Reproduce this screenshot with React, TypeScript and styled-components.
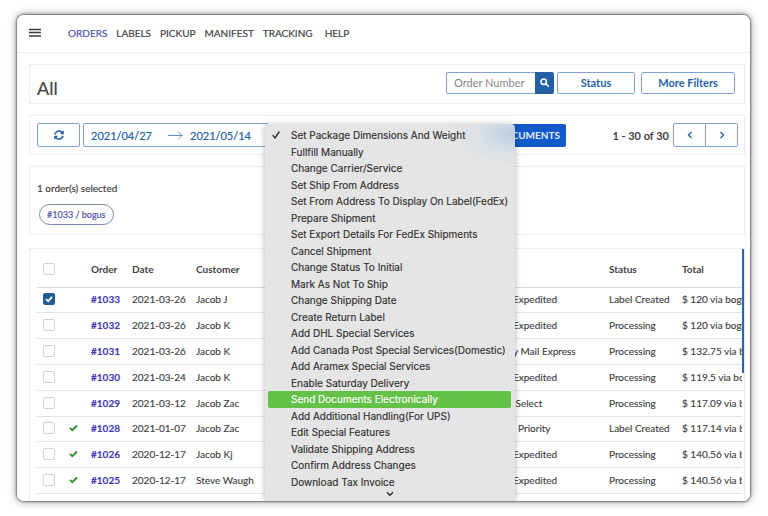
import React from 'react';
import styled, { createGlobalStyle } from 'styled-components';

const GlobalStyle = createGlobalStyle`
  * { box-sizing: border-box; }
  body { margin: 0; background: #fff; color: #424345; font-family: Lato, "Liberation Sans", sans-serif; font-size: 10px; }
  button, input { font: inherit; color: inherit; margin: 0; }
  button { padding: 0; background: none; border: 0; cursor: pointer; }
`;

const blue = '#2462a8';
const line = '#7fa3d3';

const Page = styled.div`
  height: 100vh;
  padding: 15px 18px 15px 17px;
`;

const Window = styled.div`
  position: relative;
  display: flex;
  flex-direction: column;
  height: 100%;
  overflow: hidden;
  border-radius: 7px;
  background: #fff;
`;

const WindowFrame = styled.div`
  height: 100%;
  border-radius: 7px;
  box-shadow: 0 0 2px 1px rgba(0, 0, 0, 0.45), 0 0 8px 1px rgba(0, 0, 0, 0.35);
`;

const TopBar = styled.header`
  display: flex;
  align-items: center;
  gap: 27px;
  flex: none;
  height: 38px;
  padding: 0 0 1px 12px;
  border-bottom: 1px solid #f0f0f0;
`;

const MenuToggle = styled.button`
  display: flex;
  width: 12px;
`;

const Nav = styled.nav`
  display: flex;
  gap: 9px;
`;

const NavLink = styled.a<{ $active?: boolean }>`
  font-size: 10px;
  line-height: 14px;
  text-decoration: none;
  color: ${(p) => (p.$active ? '#4a55b0' : '#424345')};
  -webkit-text-stroke: 0.2px;
  &:last-child { margin-left: 3px; }
`;

const Body = styled.main`
  display: flex;
  flex-direction: column;
  flex: 1;
  min-height: 0;
  padding: 11px 5px 0 12px;
`;

const Panel = styled.section<{ $gap?: number }>`
  display: flex;
  align-items: center;
  flex: none;
  min-height: 40px;
  margin-bottom: ${(p) => p.$gap ?? 11}px;
  padding: 0 6px 0 7px;
  border: 1px solid #eeeeef;
`;

const Title = styled.h1`
  flex: 1;
  margin: 7px 0 0;
  font-size: 18px;
  line-height: 24px;
  font-weight: 400;
  -webkit-text-stroke: 0.2px;
`;

const Filters = styled.div`
  display: flex;
  align-items: center;
  margin: 0 3px 3px 0;
  gap: 3px;
`;

const SearchBox = styled.form`
  display: flex;
  height: 22px;
`;

const SearchInput = styled.input`
  width: 89px;
  padding: 0 0 0 7px;
  border: 1px solid ${line};
  border-right: 0;
  border-radius: 2px 0 0 2px;
  font-size: 11px;
  outline: none;
  &::placeholder { color: #858585; opacity: 1; }
`;

const SearchButton = styled.button`
  display: flex;
  align-items: center;
  justify-content: center;
  width: 19px;
  border-radius: 0 2px 2px 0;
  background: #2360a5;
  color: #fff;
`;

const OutlineButton = styled.button<{ $width: number; $height?: number }>`
  display: flex;
  align-items: center;
  justify-content: center;
  flex: none;
  width: ${(p) => p.$width}px;
  height: ${(p) => p.$height ?? 22}px;
  border: 1px solid ${line};
  border-radius: 2px;
  background: #fff;
  color: ${blue};
  font-size: 11px;
  font-weight: 700;
`;

const MoreFilters = styled(OutlineButton)`
  margin-left: 3px;
`;

const DateRange = styled.div`
  display: flex;
  align-items: center;
  flex: none;
  width: 186px;
  height: 24px;
  margin-left: 3px;
  padding-left: 7px;
  gap: 11px;
  border: 1px solid ${line};
  border-radius: 2px;
  color: ${blue};
`;

const DateInput = styled.input`
  width: 66px;
  padding: 0;
  border: 0;
  outline: none;
  background: none;
  font-size: 11px;
  -webkit-text-stroke: 0.2px;
`;

const DateArrow = styled.svg`
  flex: none;
  margin-right: -4px;
`;

const DocumentsButton = styled.button`
  flex: none;
  width: 80px;
  height: 23px;
  margin-left: 217px;
  padding-right: 6px;
  border-radius: 2px;
  background: #1259c9;
  color: #e4edfb;
  font-size: 10px;
  font-weight: 700;
  text-align: right;
`;

const Pager = styled.div`
  display: flex;
  align-items: center;
  margin-left: auto;
`;

const Range = styled.span`
  margin-right: 4px;
  font-size: 11px;
  font-weight: 700;
`;

const PagerButton = styled(OutlineButton)`
  &:nth-of-type(1) { border-radius: 2px 0 0 2px; }
  &:nth-of-type(2) { margin-left: -1px; border-radius: 0 2px 2px 0; }
`;

const Selection = styled(Panel)`
  flex-direction: column;
  align-items: flex-start;
  padding: 14px 7px 9px;
`;

const SelectionText = styled.p`
  margin: 0 0 9px;
  font-size: 10px;
  line-height: 14px;
  -webkit-text-stroke: 0.2px;
`;

const Pill = styled.button`
  height: 21px;
  margin-left: 2px;
  padding: 0 7px;
  border: 1px solid #7b87b5;
  border-radius: 11px;
  color: #4f57a6;
  font-size: 9px;
  -webkit-text-stroke: 0.2px;
`;

const TablePanel = styled.section`
  display: flex;
  flex: 1;
  min-height: 0;
  border: 1px solid #eeeeef;
  border-width: 1px 0 0 1px;
`;

const TableArea = styled.div`
  flex: 1;
  min-width: 0;
  padding: 0 0 7px 7px;
`;

const Table = styled.table`
  width: 100%;
  height: 100%;
  table-layout: fixed;
  border-collapse: collapse;
`;

const HeadCell = styled.th`
  height: 38px;
  padding: 2px 0 0;
  border-bottom: 1px solid #dcdcdc;
  font-size: 10px;
  font-weight: 700;
  text-align: left;
`;

const Cell = styled.td`
  padding: 0 0 1px;
  border-bottom: 1px solid #e3e3e3;
  font-size: 10px;
  white-space: nowrap;
  overflow: hidden;
  -webkit-text-stroke: 0.15px;
`;

const OrderLink = styled.a`
  color: #3f3cb4;
  font-weight: 700;
  text-decoration: none;
`;

const Tick = styled.input`
  appearance: none;
  display: block;
  width: 12px;
  height: 12px;
  margin: 0 0 0 6px;
  border: 1px solid #d3d3d3;
  border-radius: 2px;
  background: #fff;
  &:checked {
    border-color: #215b99;
    background: #215b99 url("data:image/svg+xml,%3Csvg xmlns='http://www.w3.org/2000/svg' viewBox='0 0 10 10'%3E%3Cpath d='M2 5.2l2.2 2.1L8 2.9' fill='none' stroke='white' stroke-width='1.8'/%3E%3C/svg%3E") center / 10px no-repeat;
  }
`;

const Track = styled.div`
  flex: none;
  width: 3px;
  border-right: 1px solid #eeeeef;
`;

const Thumb = styled.div`
  width: 2px;
  height: 124px;
  background: #2b66ad;
`;

const Menu = styled.div`
  position: absolute;
  top: 109px;
  bottom: 0;
  left: 248px;
  display: flex;
  flex-direction: column;
  width: 250px;
  padding: 3px 4px 3px 3px;
  border-radius: 4px;
  background:
    radial-gradient(ellipse 65px 34px at 100% 10px, rgba(167, 197, 222, 0.7), rgba(205, 219, 230, 0.45) 55%, transparent),
    #e5e5e5;
  box-shadow: 0 1px 6px rgba(0, 0, 0, 0.3);
  color: #2e2e2e;
  font-family: Inter, "Liberation Sans", sans-serif;
`;

const MenuItem = styled.button<{ $active?: boolean }>`
  display: flex;
  align-items: center;
  flex: 1;
  border-radius: 2px;
  background: ${(p) => (p.$active ? '#62c146' : 'transparent')};
  color: ${(p) => (p.$active ? '#fff' : 'inherit')};
  font-size: 10px;
  line-height: 14px;
  white-space: nowrap;
  -webkit-text-stroke: 0.15px;
`;

const Mark = styled.span`
  display: flex;
  flex: none;
  width: 23px;
  padding-left: 4px;
`;

const MoreBelow = styled.div`
  display: flex;
  align-items: center;
  justify-content: center;
  height: 8px;
`;

const nav = ['ORDERS', 'LABELS', 'PICKUP', 'MANIFEST', 'TRACKING', 'HELP'];

const actions = [
  'Set Package Dimensions And Weight',
  'Fullfill Manually',
  'Change Carrier/Service',
  'Set Ship From Address',
  'Set From Address To Display On Label(FedEx)',
  'Prepare Shipment',
  'Set Export Details For FedEx Shipments',
  'Cancel Shipment',
  'Change Status To Initial',
  'Mark As Not To Ship',
  'Change Shipping Date',
  'Create Return Label',
  'Add DHL Special Services',
  'Add Canada Post Special Services(Domestic)',
  'Add Aramex Special Services',
  'Enable Saturday Delivery',
  'Send Documents Electronically',
  'Add Additional Handling(For UPS)',
  'Edit Special Features',
  'Validate Shipping Address',
  'Confirm Address Changes',
  'Download Tax Invoice',
];

const orders = [
  { id: '#1033', date: '2021-03-26', customer: 'Jacob J', service: 'Expedited', status: 'Label Created', total: '$ 120 via bogus', done: false },
  { id: '#1032', date: '2021-03-26', customer: 'Jacob K', service: 'Expedited', status: 'Processing', total: '$ 120 via bogus', done: false },
  { id: '#1031', date: '2021-03-26', customer: 'Jacob K', service: 'y Mail Express', status: 'Processing', total: '$ 132.75 via bogus', done: false },
  { id: '#1030', date: '2021-03-24', customer: 'Jacob K', service: 'Expedited', status: 'Processing', total: '$ 119.5 via bogus', done: false },
  { id: '#1029', date: '2021-03-12', customer: 'Jacob Zac', service: '\u00a0Select', status: 'Processing', total: '$ 117.09 via bogus', done: false },
  { id: '#1028', date: '2021-01-07', customer: 'Jacob Zac', service: '\u00a0\u00a0Priority', status: 'Label Created', total: '$ 117.14 via bogus', done: true },
  { id: '#1026', date: '2020-12-17', customer: 'Jacob Kj', service: 'Expedited', status: 'Processing', total: '$ 140.56 via bogus', done: true },
  { id: '#1025', date: '2020-12-17', customer: 'Steve Waugh', service: 'Expedited', status: 'Processing', total: '$ 140.56 via bogus', done: true },
];

const Chevron = ({ d }: { d: string }) => (
  <svg width="8" height="8" viewBox="0 0 8 8" fill="none" stroke="currentColor" strokeWidth="1.3">
    <path d={d} />
  </svg>
);

export default function App() {
  return (
    <Page>
      <GlobalStyle />
      <WindowFrame>
        <Window>
          <TopBar>
            <MenuToggle aria-label="Toggle menu">
              <svg width="12" height="10" viewBox="0 0 12 10" stroke="#3c3c3c">
                <path d="M0 1.5h12M0 4.5h12M0 8h12" strokeWidth="1.5" />
              </svg>
            </MenuToggle>
            <Nav>
              {nav.map((n, i) => (
                <NavLink key={n} href="#" $active={i === 0}>{n}</NavLink>
              ))}
            </Nav>
          </TopBar>
          <Body>
            <Panel>
              <Title>All</Title>
              <Filters>
                <SearchBox>
                  <SearchInput placeholder="Order Number" aria-label="Order Number" />
                  <SearchButton type="button" aria-label="Search">
                    <svg width="9" height="9" viewBox="0 0 9 9" fill="none" stroke="currentColor" strokeWidth="1.6">
                      <circle cx="3.7" cy="3.7" r="2.7" />
                      <path d="M5.7 5.7l2.6 2.6" strokeLinecap="round" />
                    </svg>
                  </SearchButton>
                </SearchBox>
                <OutlineButton $width={78}>Status</OutlineButton>
                <MoreFilters $width={94}>More Filters</MoreFilters>
              </Filters>
            </Panel>
            <Panel>
              <OutlineButton $width={43} $height={24} aria-label="Refresh">
                <svg width="10" height="10" viewBox="0 0 512 512" fill="currentColor">
                  <path d="M370.7 133.3C339.5 104 298.9 88 255.8 88c-77.5.1-144.3 53.2-162.8 126.9-1.3 5.4-6.1 9.1-11.7 9.1H24.1c-7.5 0-13.2-6.8-11.8-14.2C33.9 94.9 134.8 8 256 8c66.4 0 126.8 26.1 171.3 68.7L463 41c15.1-15.1 41-4.4 41 17v134c0 13.3-10.7 24-24 24H346c-21.4 0-32.1-25.9-17-41l41.7-41.7zM32 296h134c21.4 0 32.1 25.9 17 41l-41.8 41.8C172.5 408 213.1 424 256.2 424c77.5-.1 144.3-53.2 162.8-126.9 1.3-5.4 6.1-9.1 11.7-9.1h57.3c7.5 0 13.2 6.8 11.8 14.2C478.1 417.1 377.2 504 256 504c-66.4 0-126.8-26.1-171.3-68.7L49 471c-15.1 15.1-41 4.4-41-17V320c0-13.3 10.7-24 24-24z" />
                </svg>
              </OutlineButton>
              <DateRange>
                <DateInput defaultValue="2021/04/27" aria-label="From date" />
                <DateArrow width="15" height="9" viewBox="0 0 15 9" fill="none" stroke="#5d8fc9" strokeWidth="1">
                  <path d="M0 4.5h14M10 .5l4 4-4 4" />
                </DateArrow>
                <DateInput defaultValue="2021/05/14" aria-label="To date" />
              </DateRange>
              <DocumentsButton>DOCUMENTS</DocumentsButton>
              <Pager>
                <Range>1 - 30 of 30</Range>
                <PagerButton $width={33} $height={24} aria-label="Previous page"><Chevron d="M5.5 1L2.5 4l3 3" /></PagerButton>
                <PagerButton $width={33} $height={24} aria-label="Next page"><Chevron d="M2.5 1l3 3-3 3" /></PagerButton>
              </Pager>
            </Panel>
            <Selection $gap={13}>
              <SelectionText>1 order(s) selected</SelectionText>
              <Pill>#1033 / bogus</Pill>
            </Selection>
            <TablePanel>
              <TableArea>
                <Table>
                  <colgroup>
                    <col width="32" />
                    <col width="22" />
                    <col width="41" />
                    <col width="64" />
                    <col />
                    <col width="96" />
                    <col width="73" />
                    <col width="60" />
                  </colgroup>
                  <thead>
                    <tr>
                      <HeadCell><Tick type="checkbox" aria-label="Select all orders" /></HeadCell>
                      <HeadCell />
                      <HeadCell>Order</HeadCell>
                      <HeadCell>Date</HeadCell>
                      <HeadCell>Customer</HeadCell>
                      <HeadCell />
                      <HeadCell>Status</HeadCell>
                      <HeadCell>Total</HeadCell>
                    </tr>
                  </thead>
                  <tbody>
                    {orders.map((o, i) => (
                      <tr key={o.id}>
                        <Cell><Tick type="checkbox" defaultChecked={i === 0} aria-label={`Select order ${o.id}`} /></Cell>
                        <Cell>
                          {o.done && (
                            <svg width="9" height="8" viewBox="0 0 9 8" fill="none" stroke="#31912f" strokeWidth="1.9">
                              <path d="M.9 3.8l2.4 2.4L8 1.5" />
                            </svg>
                          )}
                        </Cell>
                        <Cell><OrderLink href="#">{o.id}</OrderLink></Cell>
                        <Cell>{o.date}</Cell>
                        <Cell>{o.customer}</Cell>
                        <Cell>{o.service}</Cell>
                        <Cell>{o.status}</Cell>
                        <Cell>{o.total}</Cell>
                      </tr>
                    ))}
                  </tbody>
                </Table>
              </TableArea>
              <Track><Thumb /></Track>
            </TablePanel>
          </Body>
          <Menu role="menu">
            {actions.map((a, i) => (
              <MenuItem key={a} role="menuitemradio" aria-checked={i === 0} $active={i === 16}>
                <Mark>
                  {i === 0 && (
                    <svg width="8" height="8" viewBox="0 0 8 8" fill="none" stroke="currentColor" strokeWidth="1.4" strokeLinecap="round">
                      <path d="M1 4.6l2 2.4L7 1" />
                    </svg>
                  )}
                </Mark>
                {a}
              </MenuItem>
            ))}
            <MoreBelow>
              <svg width="8" height="6" viewBox="0 0 8 6" fill="none" stroke="currentColor" strokeWidth="1.5">
                <path d="M1 1.2l3 3 3-3" />
              </svg>
            </MoreBelow>
          </Menu>
        </Window>
      </WindowFrame>
    </Page>
  );
}
